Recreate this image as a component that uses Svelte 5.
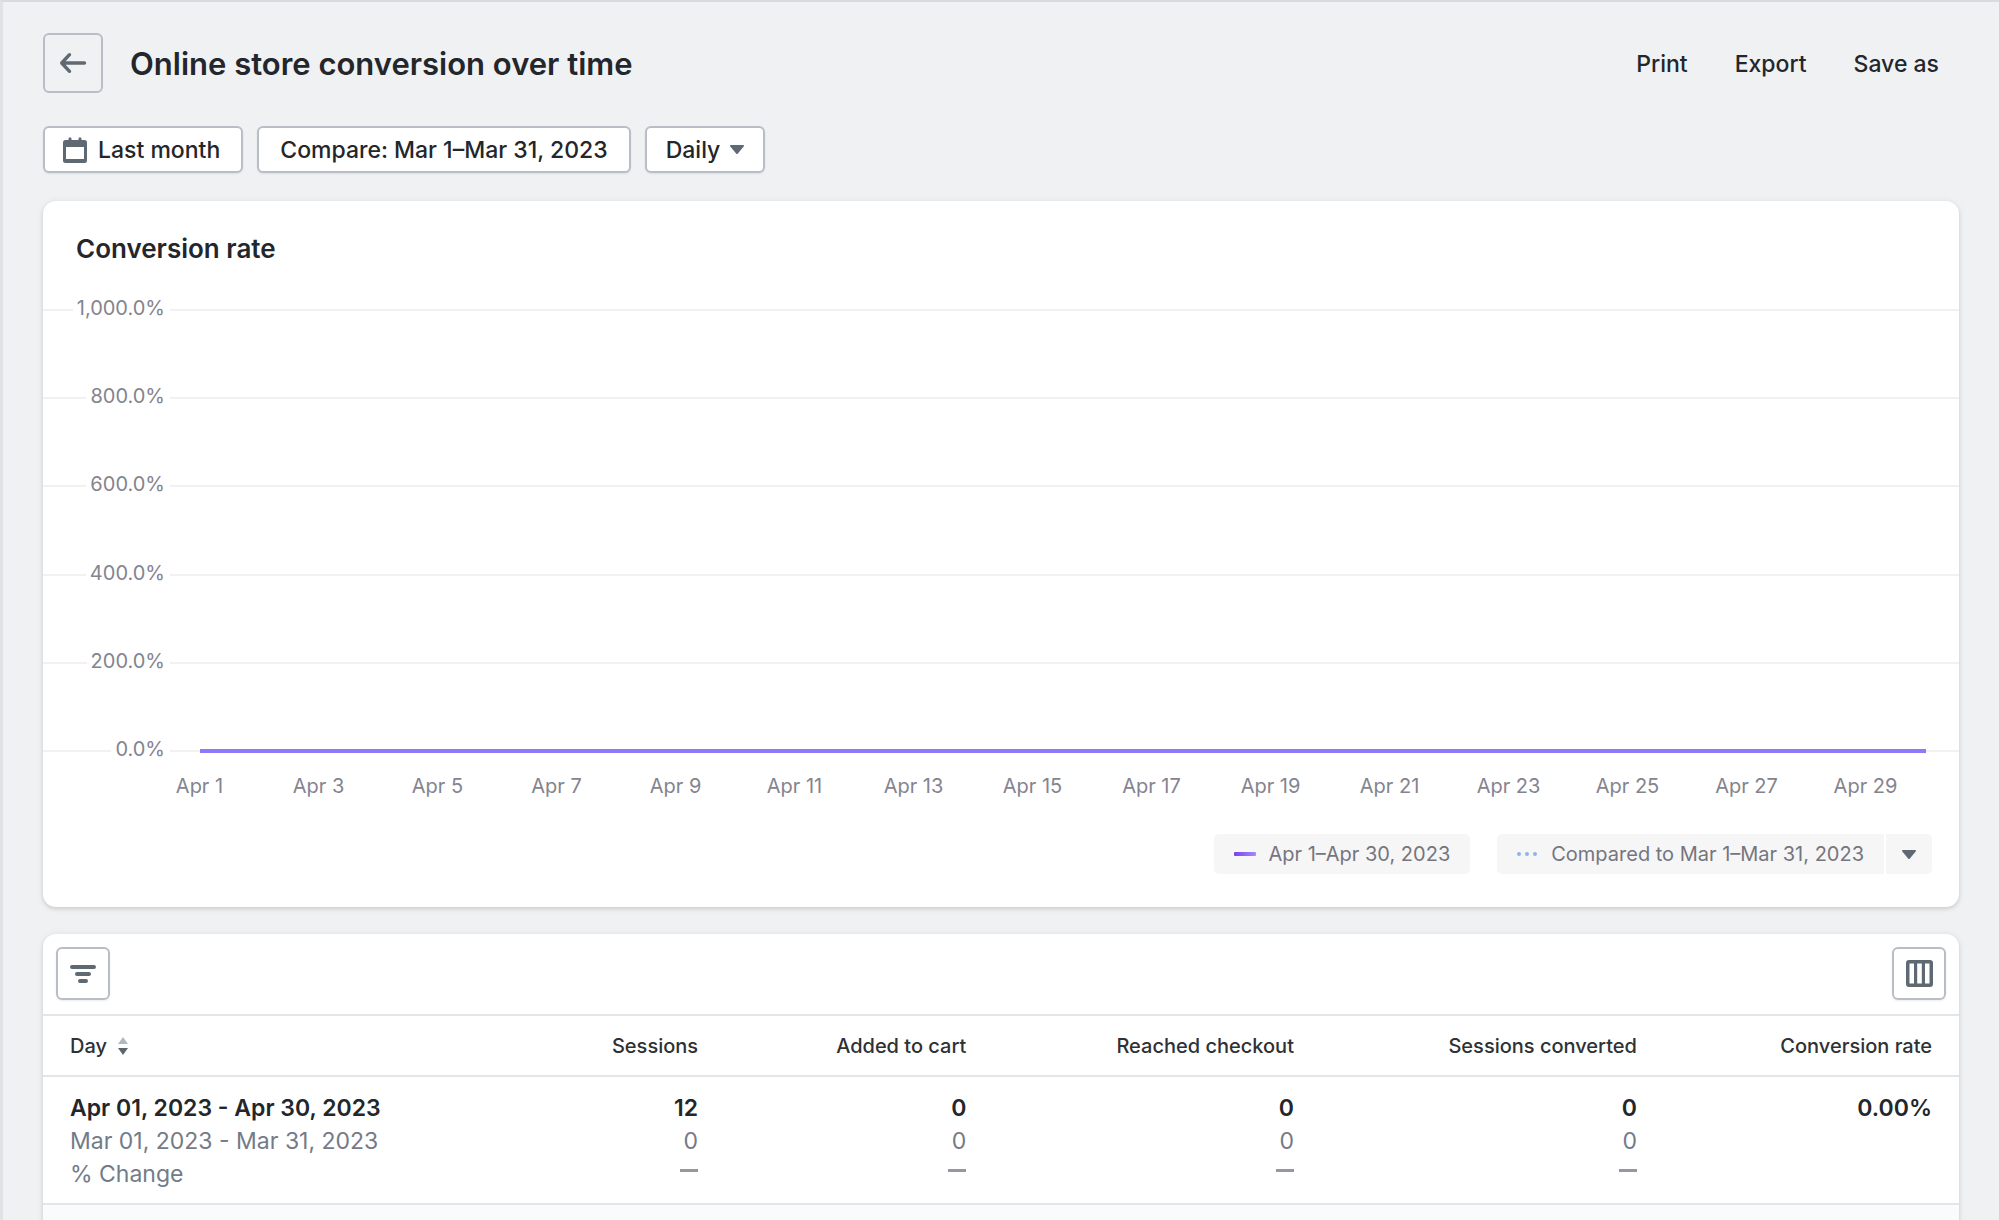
<script>
  const actions = ['Print', 'Export', 'Save as'];
  const ticks = ['1,000.0%', '800.0%', '600.0%', '400.0%', '200.0%', '0.0%'];
  const days = Array.from({ length: 15 }, (_, i) => `Apr ${i * 2 + 1}`);
  const columns = [
    { label: 'Sessions', current: '12', previous: '0', change: true },
    { label: 'Added to cart', current: '0', previous: '0', change: true },
    { label: 'Reached checkout', current: '0', previous: '0', change: true },
    { label: 'Sessions converted', current: '0', previous: '0', change: true },
    { label: 'Conversion rate', current: '0.00%', previous: '', change: false }
  ];
</script>

{#snippet caret()}
  <svg viewBox="0 0 14 9" width="14" height="9"><path fill="currentColor" d="M1 0h12c.9 0 1.300 1 .7 1.600L7.900 8.400a1.200 1.200 0 0 1-1.800 0L.3 1.600C-.3 1 .1 0 1 0z" /></svg>
{/snippet}

<main class="page">
  <header class="header">
    <button class="back" aria-label="Back">
      <svg viewBox="0 0 28 28" width="28" height="28" fill="none" stroke="currentColor" stroke-width="3.400" stroke-linecap="round" stroke-linejoin="round">
        <path d="M25.500 14H3M10.500 5.700L2.700 14l7.800 8.300" />
      </svg>
    </button>
    <h1>Online store conversion over time</h1>
    <nav class="actions" aria-label="Report actions">
      {#each actions as action}
        <button>{action}</button>
      {/each}
    </nav>
  </header>

  <div class="filters">
    <button class="filter with-icon">
      <svg viewBox="0 0 24 26" width="24" height="26">
        <path fill="currentColor" fill-rule="evenodd" d="M21.500 3H18.500V1.700a1.500 1.500 0 0 0-3 0V3h-7V1.700a1.500 1.500 0 0 0-3 0V3H2.500A2.500 2.500 0 0 0 0 5.500v18A2.500 2.500 0 0 0 2.500 26h19a2.500 2.500 0 0 0 2.500-2.500v-18A2.500 2.500 0 0 0 21.500 3zM3 10h18v12H3z" />
      </svg>
      Last month
    </button>
    <button class="filter">Compare: Mar 1–Mar 31, 2023</button>
    <button class="filter with-caret">
      Daily
      {@render caret()}
    </button>
  </div>

  <section class="card chart">
    <h2>Conversion rate</h2>
    <div class="plot">
      {#each ticks as tick, i}
        <div class="tick">
          <div class="tick-label"><span>{tick}</span></div>
          <div class="rule" class:zero={i === ticks.length - 1}></div>
        </div>
      {/each}
    </div>
    <div class="days">
      {#each days as day}<span>{day}</span>{/each}
    </div>
    <div class="legend">
      <button class="pill">
        <svg viewBox="0 0 22 4" width="22" height="4">
          <defs><linearGradient id="series"><stop offset="0" stop-color="#7b3ff2" /><stop offset="1" stop-color="#a48bfb" /></linearGradient></defs>
          <rect width="22" height="4" rx="1" fill="url(#series)" />
        </svg>
        Apr 1–Apr 30, 2023
      </button>
      <div class="split">
        <button class="pill">
          <svg viewBox="0 0 22 4" width="22" height="4" fill="#8fb3ea"><circle cx="2" cy="2" r="2" /><circle cx="10" cy="2" r="2" /><circle cx="18" cy="2" r="2" /></svg>
          Compared to Mar 1–Mar 31, 2023
        </button>
        <button class="pill more" aria-label="Comparison options">
          {@render caret()}
        </button>
      </div>
    </div>
  </section>

  <section class="card report">
    <div class="toolbar">
      <button class="tool" aria-label="Filter">
        <svg viewBox="0 0 28 20" width="28" height="20" fill="none" stroke="currentColor" stroke-width="4" stroke-linecap="round"><path d="M3 3h22M8 10h12M11 17h6" /></svg>
      </button>
      <button class="tool" aria-label="Edit columns">
        <svg viewBox="0 0 27 27" width="27" height="27"><path fill="currentColor" fill-rule="evenodd" d="M3 0h21a3 3 0 0 1 3 3v21a3 3 0 0 1-3 3H3a3 3 0 0 1-3-3V3a3 3 0 0 1 3-3zM3.500 3.500v20H8v-20zM11.200 3.500v20h4.600v-20zM19 3.500v20h4.500v-20z" /></svg>
      </button>
    </div>
    <table>
      <colgroup>
        <col class="c-day" /><col class="c-sessions" /><col class="c-cart" /><col class="c-checkout" /><col class="c-converted" /><col class="c-rate" />
      </colgroup>
      <thead>
        <tr>
          <th scope="col">
            <button class="sort">
              Day
              <svg viewBox="0 0 10 18" width="10" height="18"><path fill="#b4b8be" d="M5 0l5 7H0z" /><path fill="#5c6670" d="M5 18l5-7H0z" /></svg>
            </button>
          </th>
          {#each columns as column}<th scope="col">{column.label}</th>{/each}
        </tr>
      </thead>
      <tbody>
        <tr>
          <td>
            <strong>Apr 01, 2023 - Apr 30, 2023</strong>
            <span>Mar 01, 2023 - Mar 31, 2023</span>
            <span>% Change</span>
          </td>
          {#each columns as column}
            <td>
              <strong>{column.current}</strong>
              <span>{column.previous}</span>
              {#if column.change}<i class="dash" role="img" aria-label="No change"></i>{/if}
            </td>
          {/each}
        </tr>
        <tr class="next"><td colspan="6"></td></tr>
      </tbody>
    </table>
  </section>
</main>

<style>
  :global(body) {
    margin: 0;
    background: #f0f1f3;
  }

  .page {
    box-sizing: border-box;
    height: 100vh;
    overflow: hidden;
    padding: 31px 40px 0 40px;
    border-top: 2px solid #d9dadd;
    border-left: 3px solid #e1e2e5;
    font-family: Inter, "Liberation Sans", sans-serif;
    font-size: 23px;
    color: #23262a;
  }

  button {
    margin: 0;
    padding: 0;
    border: 0;
    background: none;
    font: inherit;
    color: inherit;
    cursor: pointer;
  }

  svg {
    display: block;
    flex: none;
  }

  h1,
  h2 {
    margin: 0;
    font-weight: 600;
  }

  .header {
    display: flex;
    align-items: center;
  }

  .back,
  .tool {
    display: flex;
    align-items: center;
    justify-content: center;
    box-sizing: border-box;
    border: 2px solid #b9bec6;
    border-radius: 6px;
    color: #5f6974;
  }

  .back {
    width: 60px;
    height: 60px;
  }

  h1 {
    margin-left: 27px;
    padding-top: 2px;
    font-size: 31px;
    line-height: 40px;
  }

  .actions {
    display: flex;
    gap: 7px;
    margin-left: auto;
    padding-top: 2px;
  }

  .actions button {
    padding: 0 20px;
    font-weight: 500;
    line-height: 32px;
  }

  .filters {
    display: flex;
    gap: 14px;
    margin-top: 33px;
  }

  .filter {
    display: flex;
    align-items: center;
    gap: 11px;
    box-sizing: border-box;
    height: 47px;
    padding: 0 21px;
    border: 2px solid #b9bec6;
    border-radius: 6px;
    background: #fff;
    box-shadow: 0 1px 2px rgba(0, 0, 0, 0.08);
    font-weight: 500;
  }

  .filter.with-icon {
    padding-left: 18px;
  }

  .filter.with-caret {
    gap: 10px;
    padding: 0 19px;
  }

  .filter svg {
    color: #5f6974;
  }

  .card {
    margin-top: 28px;
    border-radius: 13px;
    background: #fff;
    box-shadow: 0 0 8px rgba(23, 24, 24, 0.05), 0 2px 4px rgba(0, 0, 0, 0.13);
  }

  .chart {
    padding: 32px 0 33px;
  }

  h2 {
    padding-left: 33px;
    font-size: 26px;
    line-height: 32px;
  }

  .plot {
    display: flex;
    flex-direction: column;
    justify-content: space-between;
    height: 465px;
    margin-top: 33px;
    font-size: 20px;
    color: #84848f;
  }

  .tick {
    display: flex;
    align-items: center;
    height: 24px;
  }

  .tick-label {
    display: flex;
    align-items: center;
    width: 127px;
    line-height: 24px;
  }

  .tick-label::before {
    content: "";
    flex: 1;
    height: 2px;
    background: #f1f1f2;
  }

  .tick-label span {
    padding: 0 5px 4px 4px;
  }

  .rule {
    flex: 1;
    height: 2px;
    background: #f1f1f2;
  }

  .rule.zero {
    display: flex;
    align-items: center;
    padding: 0 33px 0 30px;
  }

  .rule.zero::before {
    content: "";
    flex: 1;
    height: 4px;
    background: #9078fb;
  }

  .days {
    display: flex;
    margin-top: 11px;
    padding: 0 34px 0 97px;
    font-size: 20px;
    line-height: 24px;
    color: #84848f;
  }

  .days span {
    flex: 1;
    text-align: center;
  }

  .legend {
    display: flex;
    justify-content: flex-end;
    gap: 27px;
    margin-top: 36px;
    padding-right: 27px;
  }

  .pill {
    display: flex;
    align-items: center;
    gap: 12px;
    height: 40px;
    padding: 0 20px;
    border-radius: 5px;
    background: #f6f6f7;
    font-size: 20px;
    color: #75757f;
  }

  .split {
    display: flex;
    gap: 2px;
  }

  .split .pill:first-child {
    border-radius: 5px 0 0 5px;
  }

  .pill.more {
    padding: 0 16px;
    border-radius: 0 5px 5px 0;
    color: #5f6974;
  }

  .report {
    margin-top: 27px;
    overflow: hidden;
  }

  .toolbar {
    display: flex;
    justify-content: space-between;
    padding: 13px 13px 14px;
  }

  .tool {
    width: 54px;
    height: 53px;
    box-shadow: 0 1px 2px rgba(0, 0, 0, 0.08);
  }

  table {
    width: 100%;
    border-collapse: collapse;
    table-layout: fixed;
  }

  .c-day {
    width: 25%;
  }
  .c-sessions {
    width: 10.600%;
  }
  .c-cart {
    width: 14%;
  }
  .c-checkout {
    width: 17.100%;
  }
  .c-converted {
    width: 17.900%;
  }
  .c-rate {
    width: 15.400%;
  }

  th,
  td {
    padding: 0 27px;
    border-top: 2px solid #e3e5e9;
    text-align: right;
  }

  th:first-child,
  td:first-child {
    text-align: left;
  }

  th {
    height: 61px;
    box-sizing: border-box;
    font-size: 20px;
    font-weight: 500;
    color: #2e3135;
  }

  .sort {
    display: flex;
    align-items: center;
    gap: 11px;
  }

  td {
    padding-top: 15px;
    padding-bottom: 12px;
    line-height: 33px;
    vertical-align: top;
    white-space: nowrap;
  }

  strong,
  td span {
    display: block;
  }

  strong {
    font-weight: 600;
  }

  td span {
    color: #737b87;
  }

  .dash {
    display: block;
    width: 18px;
    height: 3px;
    margin: 11px 0 0 auto;
    background: #94999f;
  }

  .next td {
    height: 33px;
    background: #fafbfc;
  }
</style>
